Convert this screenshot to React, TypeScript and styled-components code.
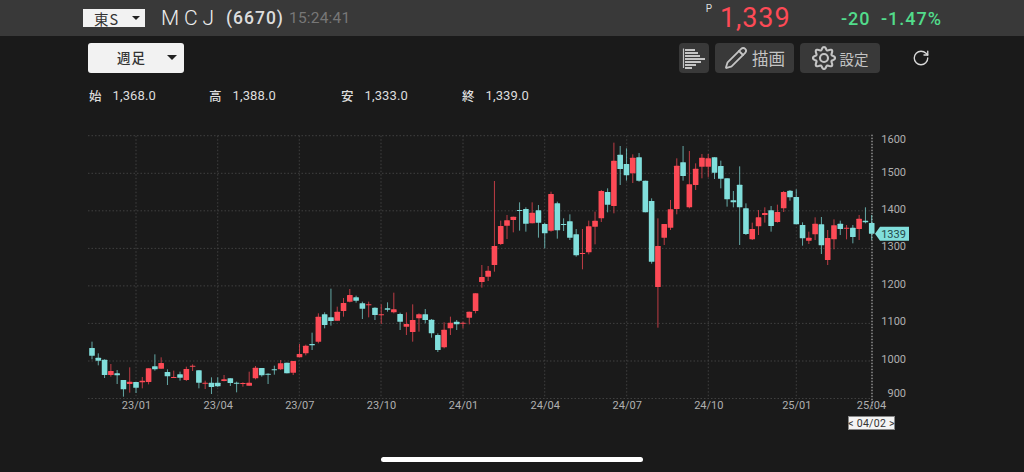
import { FC } from "react";
import styled, { createGlobalStyle } from "styled-components";
import { Pencil, RotateCw } from "lucide-react";

const CJK = `"Noto Sans CJK JP", "Noto Sans", sans-serif`;
const UI = `Roboto, "Noto Sans CJK JP", sans-serif`;
const RED = "#fd4a56";
const TEAL = "#80dedb";

const GlobalStyle = createGlobalStyle`
  html, body {
    margin: 0;
    height: 472px;
    overflow: hidden;
    background: #1a1a1a;
    font-family: ${UI};
  }
`;

const Page = styled.div`
  width: 1024px;
  height: 472px;
  display: flex;
  flex-direction: column;
  background: #1a1a1a;
`;

/* top quote bar */
const Header = styled.header`
  height: 36px;
  flex: none;
  display: flex;
  align-items: center;
  padding-left: 83px;
  background: #393939;
  color: #eee;
`;

const Market = styled.div`
  width: 62px;
  height: 18px;
  box-sizing: border-box;
  display: flex;
  align-items: center;
  justify-content: space-between;
  padding: 0 3px 0 11px;
  background: #f2f2f2;
  color: #333;
  font-family: ${CJK};
  font-size: 14.5px;
  letter-spacing: 1px;
`;

const Caret = styled.span<{ $size?: number }>`
  width: 0;
  height: 0;
  margin-right: 2px;
  border-left: ${(p) => p.$size ?? 4}px solid transparent;
  border-right: ${(p) => p.$size ?? 4}px solid transparent;
  border-top: ${(p) => p.$size ?? 4}px solid #222;
`;

const Name = styled.span`
  margin-left: 16px;
  width: 65px;
  font-size: 21px;
  font-weight: 300;
  letter-spacing: 4.8px;
  white-space: nowrap;
`;

const Code = styled.span`
  width: 63px;
  font-size: 17.5px;
  font-weight: 500;
  letter-spacing: 1px;
  color: #ddd;
`;

const Clock = styled.span`
  font-size: 15.5px;
  color: #777;
  letter-spacing: 0.2px;
`;

const Quote = styled.div`
  margin-left: auto;
  display: flex;
  align-items: center;
  height: 100%;
  padding-right: 83px;
`;

const PriceMark = styled.span`
  align-self: flex-start;
  margin-top: 3px;
  font-size: 10px;
  color: #ddd;
`;

const Price = styled.span`
  width: 121px;
  margin-left: 8px;
  font-size: 27px;
  font-weight: 400;
  letter-spacing: 0.9px;
  color: ${RED};
`;

const Change = styled.span<{ $w: number }>`
  width: ${(p) => p.$w}px;
  font-size: 18px;
  font-weight: 500;
  letter-spacing: 1px;
  color: #52dc8b;
  white-space: nowrap;
`;

/* toolbar under the quote */
const Toolbar = styled.div`
  flex: none;
  height: 30px;
  margin-top: 7px;
  display: flex;
  align-items: center;
  padding-left: 88px;
`;

const Period = styled.div`
  width: 96px;
  height: 30px;
  box-sizing: border-box;
  display: flex;
  align-items: center;
  padding: 0 5px 2px 29px;
  border-radius: 3px;
  background: #f2f2f2;
  color: #333;
  font-family: ${CJK};
  font-size: 13.5px;
  font-weight: 500;
  letter-spacing: 1px;
  justify-content: space-between;
`;

const Tools = styled.div`
  margin-left: auto;
  display: flex;
  gap: 6px;
  align-items: center;
  padding-right: 94px;
`;

const ToolButton = styled.div<{ $w: number; $size?: number }>`
  width: ${(p) => p.$w}px;
  height: 30px;
  display: flex;
  align-items: center;
  justify-content: center;
  gap: 4px;
  border-radius: 4px;
  background: #393939;
  color: #c4c4c4;
  font-family: ${CJK};
  font-size: ${(p) => p.$size ?? 16.5}px;
`;

const Reload = styled.div`
  margin-left: 26px;
  display: flex;
  color: #d8d8d8;
`;

/* open / high / low / close */
const StatRow = styled.div`
  flex: none;
  height: 20px;
  margin-top: 12px;
  margin-bottom: 5px;
  padding-left: 89px;
  display: flex;
  align-items: center;
`;

const Stat = styled.div<{ $w: number }>`
  width: ${(p) => p.$w}px;
  display: flex;
  align-items: center;
  gap: 11px;
  font-size: 13px;
  color: #ddd;
  letter-spacing: 0.1px;
`;

const StatLabel = styled.span`
  font-family: ${CJK};
  font-weight: 500;
  font-size: 12.5px;
`;

const ChartSvg = styled.svg`
  display: block;
  flex: none;
  width: 1024px;
  height: 330px;
`;

const AxisText = styled.text`
  font-family: Roboto, sans-serif;
  font-size: 11px;
  fill: #b0b0b0;
`;

const Footer = styled.footer`
  flex: 1;
  display: flex;
  justify-content: center;
  padding-top: 17px;
`;

const HomeBar = styled.div`
  width: 262px;
  height: 5px;
  border-radius: 3px;
  background: #fff;
`;

// hi, body top, body bottom, lo, up
type Row = [number, number, number, number, 0 | 1];

// read off the picture in 3x pixels, base is the top of the crop
const seg = (base: number, rows: Row[]) =>
  rows.map(([h, t, b, l, up]) => ({
    h: base + h / 3,
    t: base + t / 3,
    b: base + b / 3,
    l: base + l / 3,
    up,
  }));

const candles = [
  ...seg(260, [
    [245, 264, 287, 298, 0], [280, 293, 302, 316, 0], [298, 299, 345, 354, 0], [312, 333, 345, 350, 1],
    [330, 340, 346, 372, 0], [360, 360, 388, 410, 0], [322, 365, 372, 398, 1], [366, 366, 383, 399, 0],
    [351, 362, 367, 385, 1], [325, 325, 366, 373, 1], [283, 319, 328, 332, 0], [292, 309, 326, 326, 1],
    [328, 336, 349, 375, 0], [332, 351, 354, 354, 1], [335, 343, 353, 362, 0], [320, 327, 360, 363, 1],
    [313, 317, 319, 333, 1], [331, 331, 368, 385, 0], [362, 368, 371, 387, 1], [352, 368, 381, 402, 0],
    [352, 368, 379, 381, 0], [345, 358, 363, 364, 1], [355, 355, 369, 378, 0], [365, 368, 371, 397, 0],
    [367, 369, 372, 380, 1], [335, 368, 377, 377, 1], [318, 323, 355, 358, 1], [324, 324, 346, 350, 0],
    [340, 341, 344, 372, 0],
  ]),
  ...seg(270, [
    [287, 298, 300, 314, 0], [270, 280, 298, 300, 1], [278, 278, 310, 310, 0], [273, 273, 308, 315, 1],
    [222, 252, 262, 262, 1], [224, 227, 250, 256, 1], [188, 222, 226, 240, 0], [130, 140, 215, 220, 1],
    [127, 133, 165, 175, 0], [56, 142, 153, 167, 0], [110, 125, 152, 152, 1], [84, 99, 123, 140, 1],
    [57, 75, 95, 97, 1], [77, 82, 92, 98, 0], [95, 100, 116, 147, 0], [95, 103, 106, 142, 1],
    [112, 113, 135, 150, 0], [103, 133, 135, 162, 1], [97, 115, 119, 125, 0], [68, 118, 127, 130, 1],
    [128, 132, 155, 180, 0], [127, 162, 170, 195, 1], [103, 150, 186, 215, 1], [130, 133, 145, 185, 1],
    [117, 133, 150, 160, 0], [147, 149, 190, 203, 0], [190, 195, 240, 246, 0], [157, 179, 232, 235, 1],
  ]),
  ...seg(130, [
    [560, 578, 595, 615, 1], [570, 575, 583, 600, 0], [575, 578, 580, 595, 1], [545, 545, 563, 583, 1],
    [490, 490, 543, 550, 1], [405, 441, 456, 473, 1], [408, 422, 440, 453, 1], [153, 348, 405, 425, 1],
    [272, 288, 342, 345, 1], [255, 271, 287, 327, 1], [260, 260, 270, 307, 1], [217, 240, 243, 302, 0],
    [232, 237, 281, 305, 0], [217, 248, 280, 280, 1], [225, 241, 278, 323, 0], [278, 282, 310, 355, 0],
    [185, 192, 302, 305, 1], [215, 220, 301, 326, 0], [265, 282, 285, 303, 0], [253, 274, 323, 330, 0],
    [297, 313, 376, 380, 0], [297, 369, 372, 418, 1], [272, 289, 367, 373, 1], [245, 272, 290, 343, 1],
    [180, 183, 265, 276, 1], [175, 186, 224, 247, 0], [38, 92, 228, 250, 1], [48, 74, 117, 165, 0],
    [55, 102, 136, 152, 0], [73, 83, 130, 159, 1], [69, 82, 152, 155, 0], [152, 152, 247, 247, 0],
    [205, 213, 395, 401, 0], [265, 348, 471, 593, 1], [282, 282, 323, 345, 1], [210, 238, 293, 300, 1],
    [85, 107, 237, 253, 1], [48, 97, 138, 152, 0], [63, 163, 232, 235, 1], [100, 116, 165, 180, 1],
    [72, 83, 110, 145, 1], [72, 85, 110, 142, 1], [82, 82, 128, 147, 0], [92, 108, 146, 175, 0],
    [145, 145, 208, 230, 0], [183, 211, 217, 232, 0], [109, 164, 232, 345, 0], [220, 235, 312, 315, 0],
    [278, 297, 328, 330, 1], [240, 262, 289, 315, 1], [232, 249, 255, 278, 1], [228, 241, 288, 305, 0],
    [224, 246, 276, 278, 1], [183, 186, 235, 246, 1], [180, 182, 202, 212, 0], [178, 201, 283, 283, 0],
    [277, 285, 325, 347, 0], [305, 323, 332, 342, 1], [262, 281, 313, 330, 1], [261, 283, 346, 372, 0],
    [300, 324, 390, 405, 1], [268, 286, 328, 358, 1], [272, 281, 297, 315, 0], [285, 293, 296, 328, 1],
    [285, 293, 321, 340, 0], [255, 266, 297, 330, 1], [232, 272, 277, 280, 0], [255, 279, 311, 330, 0],
  ]),
];

const priceLines = [
  { label: "1600", y: 135.7 },
  { label: "1500", y: 173.3 },
  { label: "1400", y: 210.8 },
  { label: "1300", y: 248.4 },
  { label: "1200", y: 285.9 },
  { label: "1100", y: 323.4 },
  { label: "1000", y: 361 },
  { label: "900", y: 398.5 },
];

const priceLabelY = [143, 176, 213, 250, 288, 325, 363, 397];

const dateLines = [
  { label: "23/01", x: 136 },
  { label: "23/04", x: 217.7 },
  { label: "23/07", x: 299.3 },
  { label: "23/10", x: 381 },
  { label: "24/01", x: 463 },
  { label: "24/04", x: 544.7 },
  { label: "24/07", x: 626.7 },
  { label: "24/10", x: 708.3 },
  { label: "25/01", x: 796.3 },
  { label: "25/04", x: 871 },
];

const LEFT = 88;
const RIGHT = 872;
const TOP = 135.7;
const BOTTOM = 398.5;

const Chart: FC = () => (
  <ChartSvg viewBox="0 110 1024 330">
    {priceLines.map((l) => (
      <line key={l.label} x1={LEFT} x2={RIGHT} y1={l.y} y2={l.y} stroke="#404040" strokeWidth={1} strokeDasharray="1.5 2" />
    ))}
    {dateLines.slice(0, -1).map((d) => (
      <line key={d.label} x1={d.x} x2={d.x} y1={TOP} y2={BOTTOM} stroke="#404040" strokeWidth={1} strokeDasharray="1.5 2" />
    ))}
    <line x1={RIGHT} x2={RIGHT} y1={TOP - 1} y2={BOTTOM + 12} stroke="#c8c8c8" strokeWidth={1} strokeDasharray="1.5 1.5" />

    {candles.map((c, i) => {
      const x = 92 + i * 6.288;
      const color = c.up ? RED : TEAL;
      return (
        <g key={i}>
          <line x1={x} x2={x} y1={c.h} y2={c.l} stroke={color} strokeOpacity={0.72} strokeWidth={1} />
          <rect x={x - 2.8} y={c.t} width={5.6} height={Math.max(c.b - c.t, 1)} rx={0.5} fill={color} />
        </g>
      );
    })}

    {priceLines.map((l, i) => (
      <AxisText key={l.label} x={906} y={priceLabelY[i]} textAnchor="end">
        {l.label}
      </AxisText>
    ))}
    {dateLines.map((d) => (
      <AxisText key={d.label} x={d.x + 0.5} y={409} textAnchor="middle">
        {d.label}
      </AxisText>
    ))}

    <path d="M875 233.7 L880 226.7 H909 V240.7 H880 Z" fill={TEAL} />
    <text x={893.5} y={238} textAnchor="middle" fontFamily="Roboto, sans-serif" fontSize={11} fill="#24484a">
      1339
    </text>

    <rect x={848.5} y={416.5} width={46} height={13} fill="#f4f4f4" stroke="#888" strokeWidth={1} />
    <text x={871.5} y={427} textAnchor="middle" fontFamily="Roboto, sans-serif" fontSize={10.5} letterSpacing={0.3} fill="#333">
      {"< 04/02 >"}
    </text>
  </ChartSvg>
);

const BarsIcon: FC = () => (
  <svg width="26" height="26" viewBox="0 0 26 26" fill="none" stroke="#c4c4c4">
    <path d="M2.5 3.5 V23" strokeWidth="1.2" />
    <path d="M4 5 H14 M4 8 H17 M4 11 H19 M4 14 H24 M4 17 H20 M4 20 H15 M4 23 H11" strokeWidth="2" />
  </svg>
);

// wavy outline of the settings gear
const gearPath = Array.from({ length: 97 }, (_, i) => {
  const a = (i / 96) * Math.PI * 2;
  const r = 9.6 + 1.5 * Math.cos(a * 8);
  const x = 12 + r * Math.sin(a);
  const y = 12 - r * Math.cos(a);
  return `${i === 0 ? "M" : "L"}${x.toFixed(2)} ${y.toFixed(2)}`;
}).join(" ");

const GearIcon: FC = () => (
  <svg width="24" height="24" viewBox="0 0 24 24" fill="none" stroke="#c4c4c4" strokeWidth="2.1">
    <path d={gearPath} />
    <circle cx="12" cy="12" r="4" />
  </svg>
);

const stats = [
  { label: "始", value: "1,368.0", w: 120 },
  { label: "高", value: "1,388.0", w: 132 },
  { label: "安", value: "1,333.0", w: 121 },
  { label: "終", value: "1,339.0", w: 120 },
];

export default function App() {
  return (
    <Page>
      <GlobalStyle />
      <Header>
        <Market>
          東S
          <Caret />
        </Market>
        <Name>MCJ</Name>
        <Code>(6670)</Code>
        <Clock>15:24:41</Clock>
        <Quote>
          <PriceMark>P</PriceMark>
          <Price>1,339</Price>
          <Change $w={40}>-20</Change>
          <Change $w={60}>-1.47%</Change>
        </Quote>
      </Header>

      <Toolbar>
        <Period>
          週足
          <Caret $size={5} />
        </Period>
        <Tools>
          <ToolButton $w={30}>
            <BarsIcon />
          </ToolButton>
          <ToolButton $w={79}>
            <Pencil size={24} strokeWidth={1.8} />
            描画
          </ToolButton>
          <ToolButton $w={80} $size={14.5}>
            <GearIcon />
            設定
          </ToolButton>
          <Reload>
            <RotateCw size={18} strokeWidth={1.8} />
          </Reload>
        </Tools>
      </Toolbar>

      <StatRow>
        {stats.map((s) => (
          <Stat key={s.label} $w={s.w}>
            <StatLabel>{s.label}</StatLabel>
            {s.value}
          </Stat>
        ))}
      </StatRow>

      <Chart />

      <Footer>
        <HomeBar />
      </Footer>
    </Page>
  );
}
